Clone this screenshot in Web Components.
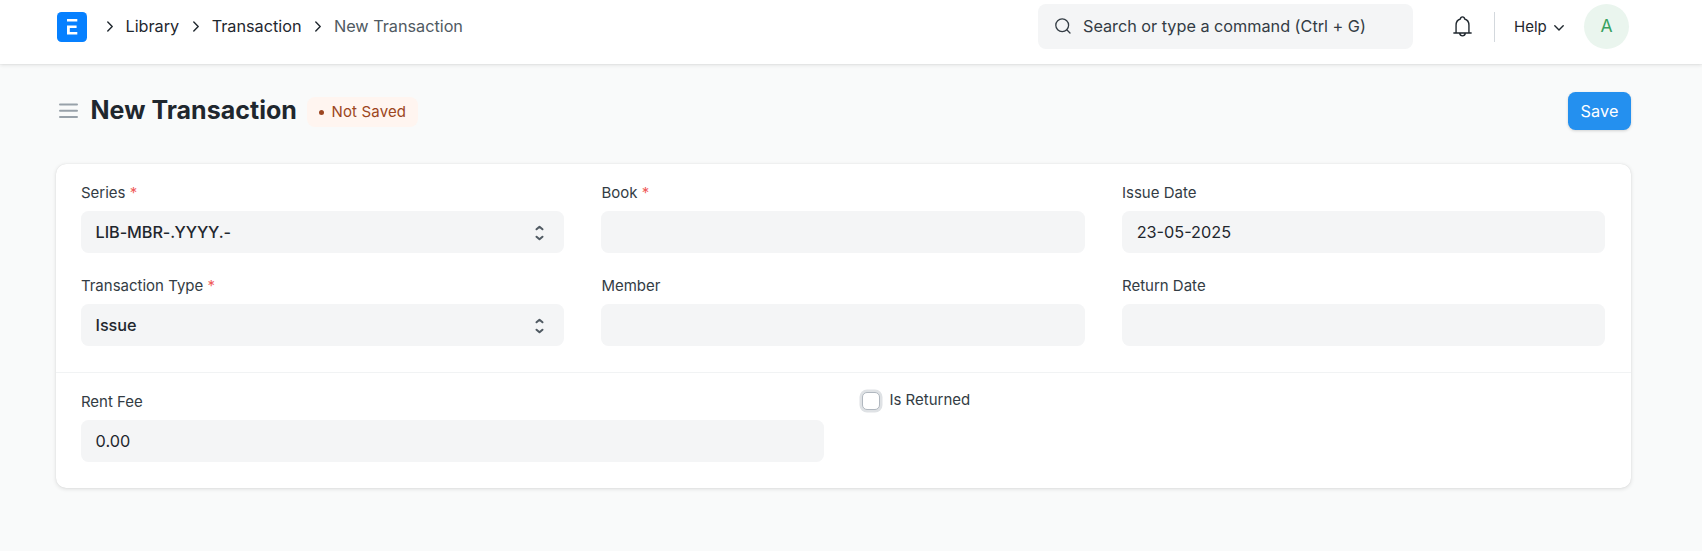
<!DOCTYPE html>
<html lang="en">
<head>
<meta charset="utf-8">
<title>New Transaction</title>
<style>
html,body{margin:0;height:100%}
body{background:#f9fafa;font-family:Inter,"Liberation Sans",sans-serif;font-size:16.25px;color:#1f272e;overflow:hidden}
</style>
</head>
<body>
<library-app></library-app>
<script>
const define = (name, html) => customElements.define(name, class extends HTMLElement {
  constructor() {
    super();
    const t = document.createElement('template');
    t.innerHTML = html;
    this.attachShadow({ mode: 'open' }).append(t.content.cloneNode(true));
  }
});

define('crumb-item', `<style>
:host{display:flex;align-items:center;white-space:nowrap;line-height:24px;letter-spacing:-.02px}
svg{width:6px;height:11px;margin-right:13px;flex:none}
span{position:relative;top:-1px}
</style><svg viewBox="0 0 6 11" fill="none" stroke="#1f272e" stroke-width="1.4" stroke-linecap="round" stroke-linejoin="round"><path d="M.8 1 5.200 5.500.8 10"/></svg><span><slot></slot></span>`);

define('search-bar', `<style>
:host{display:flex;align-items:center;box-sizing:border-box;width:375px;height:45px;border-radius:8px;background:#f4f5f6;color:#333c44;padding-left:17px;white-space:nowrap;letter-spacing:-.02px}
svg{width:17px;height:17px;margin-right:11px;flex:none}
span{position:relative;top:-1px}
</style><svg viewBox="0 0 17 17" fill="none" stroke="#333c44" stroke-width="1.3" stroke-linecap="round"><circle cx="7.2" cy="7.2" r="6.4"/><path d="m12 12 3 3"/></svg><span><slot></slot></span>`);

define('app-navbar', `<style>
:host{display:flex;box-sizing:border-box;height:64px;background:#fff;padding:4px 73px 0 57px;align-items:flex-start;box-shadow:0 0 1px rgba(0,0,0,.12),0 1px 4px rgba(0,0,0,.11)}
.left,.right{display:flex;align-items:center;height:45px}
.right{margin-left:auto}
.logo{width:30px;height:30px;margin:0 19.500px 0 0}
crumb-item{margin-right:13.500px}
.now{color:#505a62}
.bell{width:19px;height:21px;margin:0 22px 0 40px}
.rule{width:1px;height:30px;background:#d3d8dd;margin-right:19px}
.help{font-size:15px;line-height:22px;width:33px}
.down{width:10px;height:6px;margin:3px 20px 0 7px}
.avatar{width:45px;height:45px;border-radius:50%;background:#eaf5ee;color:#38a160;display:grid;place-items:center;font-size:17.5px;line-height:24px}
.avatar span{position:relative;top:-1px}
</style>
<div class="left">
<svg class="logo" viewBox="0 0 30 30"><rect width="30" height="30" rx="4.5" fill="#0680ff"/><path fill="#fff" d="M10 7h10.3v2.6H10zM10 13.6h9.6v2.5h-6.8v3.8h7.5v2.6H10z"/></svg>
<crumb-item>Library</crumb-item><crumb-item>Transaction</crumb-item><crumb-item class="now">New Transaction</crumb-item>
</div>
<div class="right">
<search-bar>Search or type a command (Ctrl + G)</search-bar>
<svg class="bell" viewBox="0 0 18 21" preserveAspectRatio="none" fill="none" stroke="#1f272e" stroke-width="1.3" stroke-linecap="round" stroke-linejoin="round"><path d="M.8 17h16.4M2.9 16.8V9.3C2.9 6 4.500 3.700 7 3 7.100 1.700 7.900.9 9 .9s1.900.8 2 2.100c2.500.7 4.100 3 4.100 6.300v7.500M6.300 17.200c.2 1.600 1.300 2.700 2.700 2.700s2.500-1.100 2.700-2.700"/></svg>
<div class="rule"></div><span class="help">Help</span>
<svg class="down" viewBox="0 0 10 6" fill="none" stroke="#1f272e" stroke-width="1.4" stroke-linecap="round" stroke-linejoin="round"><path d="M.8.8 5 5 9.200.8"/></svg>
<div class="avatar"><span>A</span></div>
</div>`);

define('page-head', `<style>
:host{display:flex;align-items:center;height:38px;padding:28px 71px 34px 59px}
.menu{width:19px;height:15px;margin:-1px 12.500px 0 0}
h1{margin:0;font-size:25px;font-weight:700;line-height:36px;width:205px;letter-spacing:.03px;white-space:nowrap;position:relative;top:-1px}
.pill{margin-left:11.500px;display:flex;align-items:center;box-sizing:border-box;width:110.500px;height:30px;margin-top:2px;padding-left:12px;border-radius:8px;background:#fff5f0;color:#9c4621;font-size:15px;letter-spacing:.15px;line-height:20px;white-space:nowrap}
.pill i{width:5px;height:5px;border-radius:50%;background:#9c4621;margin:1px 7.500px 0 0}
.save{margin-left:auto;display:grid;place-items:center;width:63px;height:38px;border-radius:7.5px;background:#2490ef;color:#fff;letter-spacing:.1px;box-shadow:0 1px 3px rgba(0,0,0,.16)}
</style>
<svg class="menu" viewBox="0 0 19 15" stroke="#98a1a9" stroke-width="2" stroke-linecap="round"><path d="M1 1.500h17M1 7.700h17M1 14h17"/></svg>
<h1>New Transaction</h1><span class="pill"><i></i><span>Not Saved</span></span><span class="save">Save</span>`);

customElements.define('form-field', class extends HTMLElement {
  constructor() {
    super();
    this.attachShadow({ mode: 'open' });
  }
  connectedCallback() {
    const on = n => this.hasAttribute(n);
    this.shadowRoot.innerHTML = `<style>
:host{display:block}
.label{font-size:15px;line-height:22px;height:22px;color:#333c44;margin-bottom:7px;white-space:nowrap}
b{font-weight:400;color:#f05c5c}
.box{box-sizing:border-box;display:flex;align-items:center;justify-content:space-between;height:42px;border-radius:7.5px;background:#f4f5f6;padding:0 20px 0 14.700px;white-space:nowrap}
.select{font-weight:500;letter-spacing:-.08px}
svg{width:9px;height:16px;margin-top:2px}
</style>
<div class="label">${this.getAttribute('label')}${on('required') ? ' <b>*</b>' : ''}</div>
<div class="box${on('select') ? ' select' : ''}"><slot></slot>${on('select') ? '<svg viewBox="0 0 9 16" fill="none" stroke="#505a62" stroke-width="2" stroke-linecap="round" stroke-linejoin="round"><path d="M1.500 4.300 4.500 1.700l3 2.600M1.500 11.700l3 2.600 3-2.600"/></svg>' : ''}</div>`;
  }
});

define('check-field', `<style>
:host{display:flex;align-items:center;height:18px;font-size:15px;color:#333c44}
i{box-sizing:border-box;width:18px;height:18px;border:1px solid #b0b7bf;border-radius:5px;background:#fff;box-shadow:0 0 0 2.500px #dfe2e5;margin:1px 9.500px 0 0}
span{line-height:18px;position:relative;top:-.5px}
</style><i></i><span><slot></slot></span>`);

define('form-card', `<style>
:host{display:block;box-sizing:border-box;width:1575px;height:324px;margin-left:56px;background:#fff;border-radius:10px;box-shadow:0 0 1px rgba(0,0,0,.12),0 1px 4px rgba(0,0,0,.12)}
.three,.two{display:grid;column-gap:37.200px;padding:0 25.700px 0 24.900px}
.three{grid-template-columns:repeat(3,1fr);row-gap:22px;padding-top:18px;height:190px;align-content:start;border-bottom:1px solid #f1f3f4}
.two{grid-template-columns:743px 1fr;column-gap:38px;padding-top:18px}
</style>
<div class="three">
<form-field label="Series" required select>LIB-MBR-.YYYY.-</form-field>
<form-field label="Book" required></form-field>
<form-field label="Issue Date">23-05-2025</form-field>
<form-field label="Transaction Type" required select>Issue</form-field>
<form-field label="Member"></form-field>
<form-field label="Return Date"></form-field>
</div>
<div class="two"><form-field label="Rent Fee">0.00</form-field><check-field>Is Returned</check-field></div>`);

define('library-app', `<style>:host{display:block}</style><app-navbar></app-navbar><page-head></page-head><form-card></form-card>`);
</script>
</body>
</html>
